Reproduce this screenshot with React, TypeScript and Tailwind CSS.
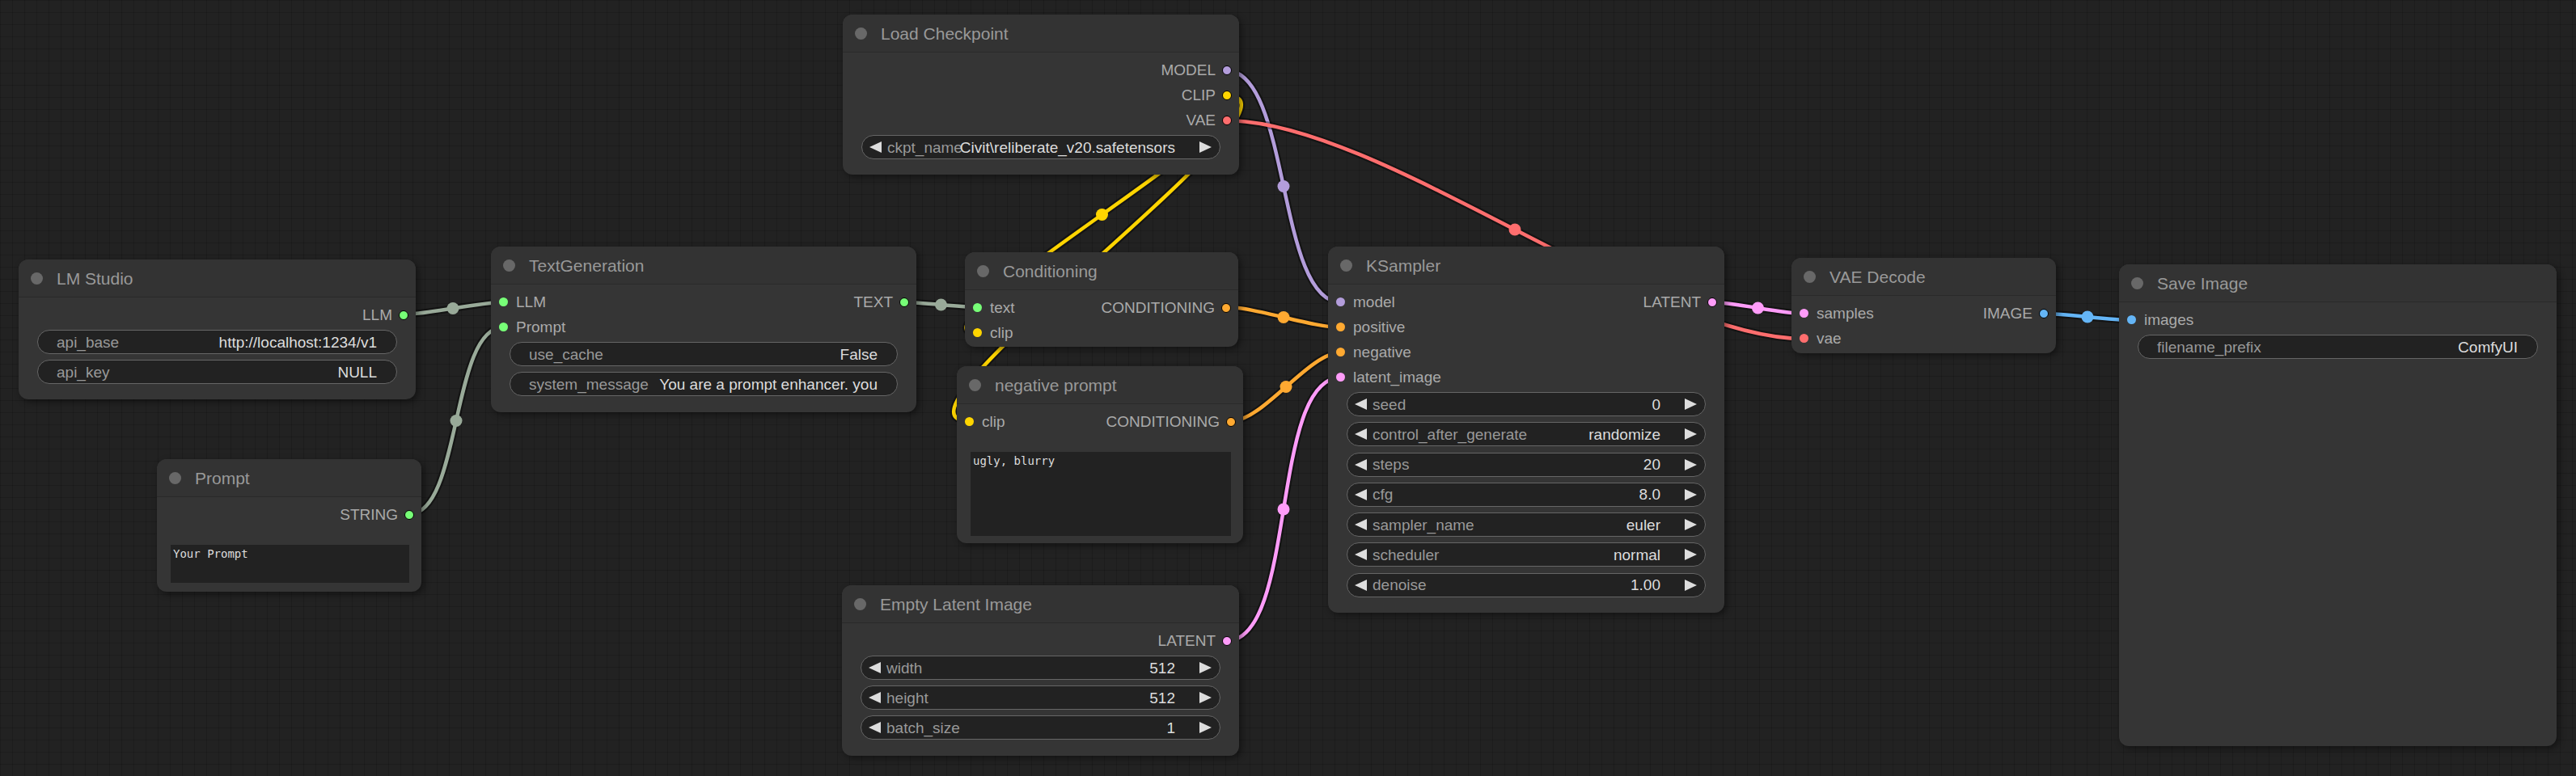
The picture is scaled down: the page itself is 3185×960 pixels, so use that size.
import React from "react";

type Slot = [string, string];

const Dot = ({ c, out }: { c: string; out?: boolean }) => (
  <span
    className={`block shrink-0 rounded-full ${c} ${
      out ? "w-[12px] h-[12px] border border-black" : "w-[11px] h-[11px]"
    }`}
  />
);

function Row({ inp, out }: { inp?: Slot; out?: Slot }) {
  return (
    <div className="h-[31px] flex items-center justify-between text-[19px] leading-none text-[#aaa]">
      {inp ? (
        <div className="flex items-center pl-[10px] gap-[10px]">
          <Dot c={inp[1]} />
          <span>{inp[0]}</span>
        </div>
      ) : (
        <div />
      )}
      {out ? (
        <div className="flex items-center pr-[9px] gap-[8px]">
          <span>{out[0]}</span>
          <Dot c={out[1]} out />
        </div>
      ) : (
        <div />
      )}
    </div>
  );
}

const LArrow = () => (
  <svg width="15" height="14" viewBox="0 0 15 14" className="shrink-0 ml-[9px]">
    <polygon points="15,0 15,14 0,7" fill="#dddddd" />
  </svg>
);
const RArrow = () => (
  <svg width="15" height="14" viewBox="0 0 15 14" className="shrink-0 ml-[30px] mr-[10px]">
    <polygon points="0,0 0,14 15,7" fill="#dddddd" />
  </svg>
);

function Widget({
  label,
  value,
  arrows,
  overlap,
}: {
  label: string;
  value: string;
  arrows?: boolean;
  overlap?: boolean;
}) {
  return (
    <div className="mx-[23px] h-[30px] shrink-0 rounded-full border border-[#666] bg-[#222] flex items-center text-[19px] leading-none whitespace-nowrap overflow-hidden">
      {arrows && <LArrow />}
      <span
        className={`${arrows ? "ml-[7px]" : "ml-[23px]"} text-[#999] ${
          overlap ? "w-0 overflow-visible" : ""
        }`}
      >
        {label}
      </span>
      <span className="flex-1" />
      <span className={`text-[#ddd] ${arrows ? "" : "mr-[24px]"}`}>{value}</span>
      {arrows && <RArrow />}
    </div>
  );
}

function Node({
  pos,
  title,
  children,
}: {
  pos: string;
  title: string;
  children?: React.ReactNode;
}) {
  return (
    <div
      className={`absolute ${pos} rounded-[12px] bg-[#353535] shadow-[3px_3px_8px_rgba(0,0,0,0.45)] flex flex-col overflow-hidden`}
    >
      <div className="h-[47px] shrink-0 bg-[#333333] border-b border-[#2a2a2a] flex items-center pl-[15px] gap-[17px]">
        <span className="block w-[15px] h-[15px] rounded-full bg-[#686868]" />
        <span className="text-[21px] leading-none text-[#999]">{title}</span>
      </div>
      <div className="flex-1 flex flex-col pt-[6px] min-h-0">{children}</div>
    </div>
  );
}

const Widgets = ({ children, gap }: { children: React.ReactNode; gap?: string }) => (
  <div className={`mt-[3px] flex flex-col ${gap ?? "gap-[7px]"}`}>{children}</div>
);

const G = "bg-[#77ff77]";
const MODEL = "bg-[#b39ddb]";
const CLIP = "bg-[#ffd500]";
const VAE = "bg-[#ff6e6e]";
const COND = "bg-[#ffa931]";
const LAT = "bg-[#ff9cf9]";
const IMG = "bg-[#64b5f6]";

type L = [number, number, number, number, string];
const links: L[] = [
  [498, 389, 622, 374, "#99aa99"],
  [506, 636, 622, 405, "#99aa99"],
  [1118, 374, 1209, 380, "#99aa99"],
  [1516, 118, 1209, 413, "#ffd500"],
  [1516, 118, 1198, 521, "#ffd500"],
  [1516, 87, 1658, 374, "#b39ddb"],
  [1516, 149, 2230, 419, "#ff6e6e"],
  [1516, 380, 1658, 405, "#ffa931"],
  [1522, 521, 1658, 436, "#ffa931"],
  [1516, 793, 1658, 467, "#ff9cf9"],
  [2117, 374, 2230, 388, "#ff9cf9"],
  [2527, 388, 2635, 396, "#64b5f6"],
];

function Links() {
  return (
    <svg className="absolute left-0 top-0 pointer-events-none" width="3185" height="960">
      {links.map(([x1, y1, x2, y2, c], i) => {
        const d = Math.hypot(x2 - x1, y2 - y1) * 0.25;
        const c1 = x1 + d;
        const c2 = x2 - d;
        const p = `M${x1} ${y1} C${c1} ${y1} ${c2} ${y2} ${x2} ${y2}`;
        const mx = 0.125 * x1 + 0.375 * c1 + 0.375 * c2 + 0.125 * x2;
        const my = (y1 + y2) / 2;
        return (
          <g key={i}>
            <path d={p} fill="none" stroke="rgba(0,0,0,0.4)" strokeWidth={9} strokeLinecap="round" />
            <path d={p} fill="none" stroke={c} strokeWidth={4.5} strokeLinecap="round" />
            <circle cx={mx} cy={my} r={7.5} fill={c} />
          </g>
        );
      })}
    </svg>
  );
}

export default function App() {
  return (
    <div className="relative w-[3185px] h-[960px] overflow-hidden bg-[#222222] bg-[linear-gradient(to_right,rgba(0,0,0,0.16)_1px,transparent_1px),linear-gradient(to_bottom,rgba(0,0,0,0.16)_1px,transparent_1px)] bg-[size:15px_15px] font-['Liberation_Sans',Arial,sans-serif]">
      <Links />

      <Node pos="left-[23px] top-[321px] w-[491px] h-[173px]" title="LM Studio">
        <Row out={["LLM", G]} />
        <Widgets>
          <Widget label="api_base" value="http://localhost:1234/v1" />
          <Widget label="api_key" value="NULL" />
        </Widgets>
      </Node>

      <Node pos="left-[194px] top-[568px] w-[327px] h-[164px]" title="Prompt">
        <Row out={["STRING", G]} />
        <div className="mt-[22px] mb-[11px] ml-[17px] mr-[15px] flex-1 bg-[#222] p-[3px] font-['DejaVu_Sans_Mono',monospace] text-[14px] leading-[1.2] text-[#ddd]">
          Your Prompt
        </div>
      </Node>

      <Node pos="left-[607px] top-[305px] w-[526px] h-[205px]" title="TextGeneration">
        <Row inp={["LLM", G]} out={["TEXT", G]} />
        <Row inp={["Prompt", G]} />
        <Widgets>
          <Widget label="use_cache" value="False" />
          <Widget label="system_message" value="You are a prompt enhancer. you" />
        </Widgets>
      </Node>

      <Node pos="left-[1042px] top-[18px] w-[490px] h-[198px]" title="Load Checkpoint">
        <Row out={["MODEL", MODEL]} />
        <Row out={["CLIP", CLIP]} />
        <Row out={["VAE", VAE]} />
        <Widgets>
          <Widget label="ckpt_name" value="Civit\reliberate_v20.safetensors" arrows overlap />
        </Widgets>
      </Node>

      <Node pos="left-[1193px] top-[312px] w-[338px] h-[117px]" title="Conditioning">
        <Row inp={["text", G]} out={["CONDITIONING", COND]} />
        <Row inp={["clip", CLIP]} />
      </Node>

      <Node pos="left-[1183px] top-[453px] w-[354px] h-[219px]" title="negative prompt">
        <Row inp={["clip", CLIP]} out={["CONDITIONING", COND]} />
        <div className="mt-[22px] mb-[9px] ml-[17px] mr-[15px] flex-1 bg-[#222] p-[3px] font-['DejaVu_Sans_Mono',monospace] text-[14px] leading-[1.2] text-[#ddd]">
          ugly, blurry
        </div>
      </Node>

      <Node pos="left-[1041px] top-[724px] w-[491px] h-[211px]" title="Empty Latent Image">
        <Row out={["LATENT", LAT]} />
        <Widgets>
          <Widget label="width" value="512" arrows />
          <Widget label="height" value="512" arrows />
          <Widget label="batch_size" value="1" arrows />
        </Widgets>
      </Node>

      <Node pos="left-[1642px] top-[305px] w-[490px] h-[453px]" title="KSampler">
        <Row inp={["model", MODEL]} out={["LATENT", LAT]} />
        <Row inp={["positive", COND]} />
        <Row inp={["negative", COND]} />
        <Row inp={["latent_image", LAT]} />
        <Widgets gap="gap-[7.3px]">
          <Widget label="seed" value="0" arrows />
          <Widget label="control_after_generate" value="randomize" arrows />
          <Widget label="steps" value="20" arrows />
          <Widget label="cfg" value="8.0" arrows />
          <Widget label="sampler_name" value="euler" arrows />
          <Widget label="scheduler" value="normal" arrows />
          <Widget label="denoise" value="1.00" arrows />
        </Widgets>
      </Node>

      <Node pos="left-[2215px] top-[319px] w-[327px] h-[118px]" title="VAE Decode">
        <Row inp={["samples", LAT]} out={["IMAGE", IMG]} />
        <Row inp={["vae", VAE]} />
      </Node>

      <Node pos="left-[2620px] top-[327px] w-[541px] h-[596px]" title="Save Image">
        <Row inp={["images", IMG]} />
        <Widgets gap="gap-[7px]">
          <Widget label="filename_prefix" value="ComfyUI" />
        </Widgets>
      </Node>
    </div>
  );
}
